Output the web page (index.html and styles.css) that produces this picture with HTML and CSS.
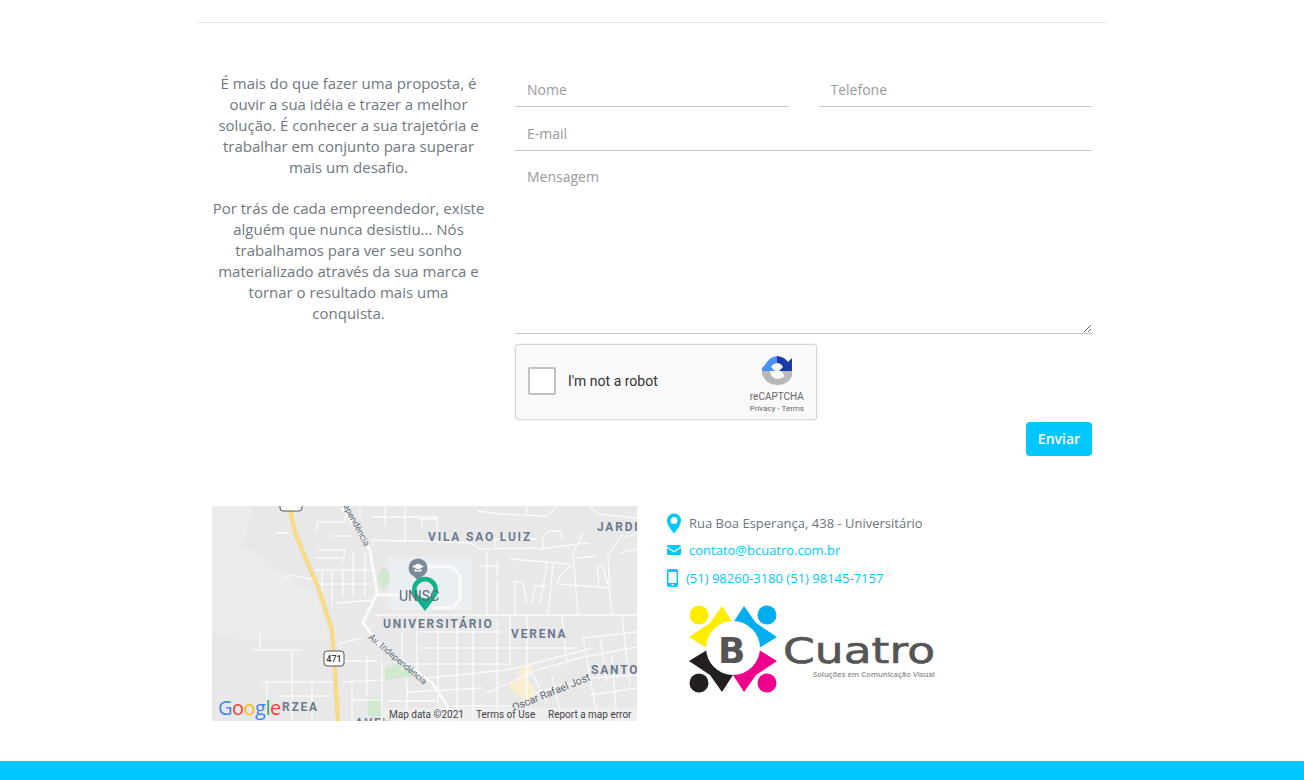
FILE: index.html
```html
<!DOCTYPE html>
<html lang="pt-BR">
<head>
  <meta charset="UTF-8" />
  <title>BCuatro - Contato</title>
  <meta name="viewport" content="width=device-width, initial-scale=1.0"/>
  <link rel="stylesheet" href="styles.css">
</head>
<body>
  <div class="container">
    <div class="contact-row">
      <div class="intro">
        <p>É mais do que fazer uma proposta, é ouvir a sua idéia e trazer a melhor solução. É conhecer a sua trajetória e trabalhar em conjunto para superar mais um desafio.</p>
        <p>Por trás de cada empreendedor, existe alguém que nunca desistiu... Nós trabalhamos para ver seu sonho materializado através da sua marca e tornar o resultado mais uma conquista.</p>
      </div>

      <form class="contact-form">
        <div class="form-pair">
          <input type="text" placeholder="Nome">
          <input type="text" placeholder="Telefone">
        </div>
        <input type="text" placeholder="E-mail">
        <textarea placeholder="Mensagem"></textarea>

        <div class="recaptcha">
          <span class="recaptcha-box"></span>
          <span class="recaptcha-label">I'm not a robot</span>
          <div class="recaptcha-brand">
            <svg width="32" height="32" viewBox="0 0 32 32">
              <path d="M1 17V14L4 11Q8 3 16 2V9Q11 10 10 13L14 17Z" fill="#4a90f5"/>
              <path d="M16 2Q24 3 27 8L31 4V17H18L22 13Q20 9 16 9Z" fill="#1c3aa9"/>
              <path d="M1 17H9Q10 25 17 25Q21 25 24 22L20 17H31V22Q27 31 16 31Q5 31 1 20Z" fill="#b8b8b8"/>
            </svg>
            <span class="recaptcha-name">reCAPTCHA</span>
            <span class="recaptcha-links">Privacy - Terms</span>
          </div>
        </div>

        <div class="form-actions">
          <button type="button" class="send-btn">Enviar</button>
        </div>
      </form>
    </div>

    <div class="location-row">
      <svg class="map" width="425" height="215" viewBox="0 0 425 215">
        <rect width="425" height="215" fill="#e8e8e8"/>
        <path d="M0 0H40L32 40L60 60L105 90L118 135H60L0 130Z" fill="#ebebe9"/>
        <rect x="176" y="51" width="84" height="53" fill="#ebeef2"/>
        <ellipse cx="172" cy="72" rx="6" ry="10" fill="#cfe8cf"/>
        <path d="M173 162L190 157L203 170L173 174ZM156 192H170V210H156Z" fill="#cfe8cf"/>
        <path d="M298 176L305 172L309 160L322 159L315 172L325 187L316 196L298 184Z" fill="#f8efd2"/>
        <g class="map-streets">
          <!-- upper left blocks -->
          <path d="M105 16H133V10M105 16V25M106 44H133L131 56M141 46V90M153 46V90M103 64H160M131 64V90M70 74L80 69L103 74M125 97L163 94M63 27H76"/>
          <path d="M173 0V20M193 0V34M160 11H226M160 34L193 35L218 35M103 78H160M110 64V100M120 64V100M210 11V20M148 0V11M120 30H140M103 52H130"/>
          <!-- lower left blocks -->
          <path d="M41 144H90M48 124V144M80 144V214M50 176H123M55 176V214M126 138L150 132M130 176L173 174M140 194H170M170 154V214M100 176V214M140 176V214M155 150V190M65 190H120M130 155H165"/>
          <!-- upper right -->
          <path d="M265 5L288 8L335 10L345 0M315 0V8M378 0L385 8L425 12M208 13H225V25M218 35L258 37L268 43L325 42M283 43V33H325M331 42V30L338 25H348L350 33"/>
          <path d="M326 43L365 38L378 37M371 27L361 47L366 110M365 52L383 50M268 60H288M275 45V110M285 55V70M285 75V105M298 53L358 58M335 57L328 97M341 57L336 110"/>
          <path d="M360 58L348 70L345 78L398 82M303 75L311 77L315 97M303 75V110M319 97L323 80H335M411 28L396 50L398 87L400 110M411 33L425 27M408 47L425 43M385 60H391L396 80M385 60L387 80"/>
          <!-- grid under universitario -->
          <path d="M163 109H425M208 126H290M208 142H365M190 158H295M226 115V214M245 115V214M261 115V214M285 115V214M298 109V160M315 109V215M205 115V170M190 125V165"/>
          <path d="M215 172L295 164L381 142M275 187L325 164L371 151L425 141M318 189L378 172L425 169M318 164L335 196M371 132L385 209M388 132L395 176M371 132L425 126M378 189L425 182M350 110L355 160"/>
          <path d="M195 186L270 182M240 200H300M340 170L350 215M400 150L405 215M410 110L418 180M175 195H225M195 172V215"/>
        </g>
        <g class="map-streets-wide">
          <path d="M130 2L158 44L165 87L151 117L166 137L220 177L236 201V215"/>
          <path d="M165 89H193M196 61H240L248 70V94L240 102H220"/>
        </g>
        <path class="map-road-edge" d="M78 4L83 27L106 81L120 124L123 167L126 215"/>
        <path class="map-road" d="M78 4L83 27L106 81L120 124L123 167L126 215"/>
        <rect x="112" y="145" width="20" height="15" rx="3" fill="#fff" stroke="#555"/>
        <text class="map-shield" x="122" y="156">471</text>
        <rect x="68" y="-8" width="22" height="13" rx="3" fill="#fff" stroke="#555"/>
        <text class="map-label" x="216" y="35">VILA SAO LUIZ</text>
        <text class="map-label" x="385" y="25">JARDI</text>
        <text class="map-label" x="171" y="122">UNIVERSITÁRIO</text>
        <text class="map-label" x="299" y="132">VERENA</text>
        <text class="map-label" x="379" y="168">SANTO</text>
        <text class="map-label" x="70" y="205">RZEA</text>
        <text class="map-label" x="143" y="221">AVEN</text>
        <text class="map-street-name" transform="translate(131 0) rotate(62)">ependência</text>
        <text class="map-street-name" transform="translate(156 132) rotate(40)">Av. Independência</text>
        <text class="map-street-name map-street-long" transform="translate(302 205) rotate(-22)">Oscar Rafael Jost</text>
        <circle cx="206" cy="62" r="9.500" fill="#7b8a99"/>
        <path d="M206 75l-5-6h10Z" fill="#7b8a99"/>
        <path d="M200 60.500l6-3 6 3-6 3ZM202.500 63v2.500h7V63l-3.500 1.500Z" fill="#fff"/>
        <path d="M213 105L203 92A13 13 0 1 1 223 92Z" fill="#10b48a"/>
        <circle cx="213" cy="84" r="8.500" fill="#e8ecf0"/>
        <text class="map-poi" x="187" y="95">UNISC</text>
        <text class="map-google" x="6" y="209"><tspan fill="#4285f4">G</tspan><tspan fill="#ea4335">o</tspan><tspan fill="#fbbc05">o</tspan><tspan fill="#4285f4">g</tspan><tspan fill="#34a853">l</tspan><tspan fill="#ea4335">e</tspan></text>
        <rect x="172" y="202" width="253" height="13" fill="#f2f2f2" opacity=".7"/>
        <text class="map-credit" x="177" y="212">Map data ©2021</text>
        <text class="map-credit" x="264" y="212">Terms of Use</text>
        <text class="map-credit" x="336" y="212">Report a map error</text>
      </svg>

      <div class="contact-info">
        <div class="info-line info-address">
          <svg width="14" height="21" viewBox="0 0 14 21"><path fill-rule="evenodd" d="M7 0.500A7 7 0 0 1 14 7.500C14 12 9 18 7 20.500C5 18 0 12 0 7.500A7 7 0 0 1 7 0.500ZM7 4A3.500 3.500 0 1 0 7 11A3.500 3.500 0 0 0 7 4Z" fill="#00c8ff"/></svg>
          <span>Rua Boa Esperança, 438 - Universitário</span>
        </div>
        <div class="info-line info-mail">
          <svg width="14" height="10" viewBox="0 0 14 10"><path d="M0 1.500Q0 0 1.500 0H12.500Q14 0 14 1.500L7 6ZM0 3L7 7.500L14 3V8.500Q14 10 12.500 10H1.500Q0 10 0 8.500Z" fill="#00c8ff"/></svg>
          <span>contato@bcuatro.com.br</span>
        </div>
        <div class="info-line info-phone">
          <svg width="11" height="18" viewBox="0 0 11 18"><path fill-rule="evenodd" d="M2 0H9Q11 0 11 2V16Q11 18 9 18H2Q0 18 0 16V2Q0 0 2 0ZM1.500 3V14H9.500V3ZM5.500 14.800A1 1 0 1 0 5.500 16.800A1 1 0 0 0 5.500 14.800Z" fill="#00c8ff"/></svg>
          <span>(51) 98260-3180 (51) 98145-7157</span>
        </div>

        <svg class="logo" width="255" height="95" viewBox="0 0 255 95">
          <circle cx="14" cy="12" r="9.500" fill="#ffed00"/>
          <circle cx="82" cy="12" r="9.500" fill="#00aeef"/>
          <circle cx="14" cy="80" r="9.500" fill="#231f20"/>
          <circle cx="82" cy="80" r="9.500" fill="#ec008c"/>
          <path d="M37 3L48 20L22 45L4 34L25 20Z" fill="#ffed00"/>
          <path d="M59 3L48 20L74 45L92 34L71 20Z" fill="#00aeef"/>
          <path d="M37 89L48 72L22 47L4 58L25 72Z" fill="#231f20"/>
          <path d="M59 89L48 72L74 47L92 58L71 72Z" fill="#ec008c"/>
          <circle cx="48" cy="45" r="27" fill="#fff"/>
          <text class="logo-b" x="33" y="60">B</text>
          <text class="logo-name" x="98" y="60" textLength="152" lengthAdjust="spacingAndGlyphs">Cuatro</text>
          <text class="logo-tag" x="128" y="74" textLength="122" lengthAdjust="spacingAndGlyphs">Soluções em Comunicação Visual</text>
        </svg>
      </div>
    </div>
  </div>

  <div class="footer-bar"></div>
</body>
</html>
```

FILE: styles.css
```css
body {
  margin: 0;
  padding-top: 22px;
  background: #fff;
  font-family: 'Open Sans', sans-serif;
  color: #6f7880;
}

.container {
  width: 880px;
  margin: 0 auto;
  padding: 50px 15px 0;
  border-top: 1px solid #e6e6e6;
}

.contact-row {
  display: flex;
  gap: 30px;
}

.intro {
  width: 273px;
  flex-shrink: 0;
  font-size: 15px;
  line-height: 21px;
  text-align: center;
}

.intro p {
  margin: 0 0 20px;
}

.contact-form {
  flex: 1;
  display: flex;
  flex-direction: column;
  gap: 10px;
}

.form-pair {
  display: flex;
  gap: 30px;
}

.form-pair input {
  flex: 1;
  min-width: 0;
}

input, textarea {
  display: block;
  box-sizing: border-box;
  width: 100%;
  border: none;
  border-bottom: 1px solid #c8c8c8;
  outline: none;
  background: transparent;
  font-family: 'Open Sans', sans-serif;
  font-size: 14px;
  padding: 0 12px;
  color: #495057;
}

input {
  height: 34px;
}

textarea {
  height: 173px;
  padding-top: 6px;
  resize: vertical;
}

input::placeholder, textarea::placeholder {
  color: #9a9a9a;
  opacity: 1;
}

.recaptcha {
  box-sizing: border-box;
  width: 302px;
  height: 76px;
  display: flex;
  align-items: center;
  background: #f9f9f9;
  border: 1px solid #d6d6d6;
  border-radius: 3px;
  box-shadow: 0 0 3px rgba(0,0,0,0.1);
  padding: 0 12px 0 12px;
  font-family: Roboto, sans-serif;
  color: #333;
}

.recaptcha-box {
  box-sizing: border-box;
  width: 28px;
  height: 28px;
  margin-top: -2px;
  background: #fff;
  border: 2px solid #c1c1c1;
  border-radius: 2px;
}

.recaptcha-label {
  margin-left: 12px;
  padding-bottom: 2px;
  font-size: 14px;
}

.recaptcha-brand {
  margin-left: auto;
  display: flex;
  flex-direction: column;
  align-items: center;
  color: #666;
  padding-top: 5px;
}

.recaptcha-name {
  font-size: 10px;
  line-height: 12px;
  margin-top: 5px;
}

.recaptcha-links {
  font-size: 8px;
  line-height: 12px;
}

.form-actions {
  display: flex;
  justify-content: flex-end;
  margin-top: -8px;
}

.send-btn {
  width: 66px;
  height: 34px;
  padding: 0 0 2px;
  border: none;
  border-radius: 4px;
  background: #00c8ff;
  color: #fff;
  font-family: 'Open Sans', sans-serif;
  font-size: 14px;
  font-weight: 600;
  cursor: pointer;
}

.location-row {
  display: flex;
  gap: 30px;
  margin-top: 50px;
}

.map {
  display: block;
  flex-shrink: 0;
}

.map-streets path {
  fill: none;
  stroke: #fafafa;
  stroke-width: 1.300;
}

.map-streets-wide path {
  fill: none;
  stroke: #fafafa;
  stroke-width: 3;
}

.map-road-edge {
  fill: none;
  stroke: #f0d48a;
  stroke-width: 4;
}

.map-road {
  fill: none;
  stroke: #fddc7c;
  stroke-width: 2.500;
}

.map-label {
  font-family: Roboto, sans-serif;
  font-size: 12px;
  font-weight: 700;
  letter-spacing: 1.800px;
  fill: #6b7a8d;
}

.map-poi {
  font-family: Roboto, sans-serif;
  font-size: 14px;
  fill: #5b6b7d;
}

.map-street-name {
  font-family: Roboto, sans-serif;
  font-size: 9px;
  fill: #5f6b78;
}

.map-street-long {
  font-size: 10.500px;
}

.map-shield {
  font-family: Roboto, sans-serif;
  font-size: 9px;
  font-weight: 500;
  text-anchor: middle;
  fill: #333;
}

.map-google {
  font-family: 'Open Sans', sans-serif;
  font-size: 20px;
  letter-spacing: -0.500px;
}

.map-credit {
  font-family: Roboto, sans-serif;
  font-size: 10px;
  fill: #444;
}

.contact-info {
  flex: 1;
  padding-top: 7px;
  font-size: 13px;
}

.info-line {
  display: flex;
  align-items: center;
  gap: 8px;
  height: 20px;
  color: #00c8ff;
}

.info-address {
  margin-bottom: 7px;
  color: #6c757d;
}

.info-mail {
  margin-bottom: 8px;
}

.logo {
  display: block;
  margin: 15px 0 0 18px;
}

.logo-b {
  font-family: 'DejaVu Sans', sans-serif;
  font-size: 36px;
  font-weight: 700;
  fill: #555;
}

.logo-name {
  font-family: 'DejaVu Sans', sans-serif;
  font-size: 36px;
  fill: #555;
  stroke: #555;
  stroke-width: 0.600;
}

.logo-tag {
  font-family: 'Open Sans', sans-serif;
  font-size: 6.500px;
  font-weight: 600;
  fill: #8a8a8a;
}

.footer-bar {
  height: 19px;
  margin-top: 40px;
  background: #00c8ff;
}
```
